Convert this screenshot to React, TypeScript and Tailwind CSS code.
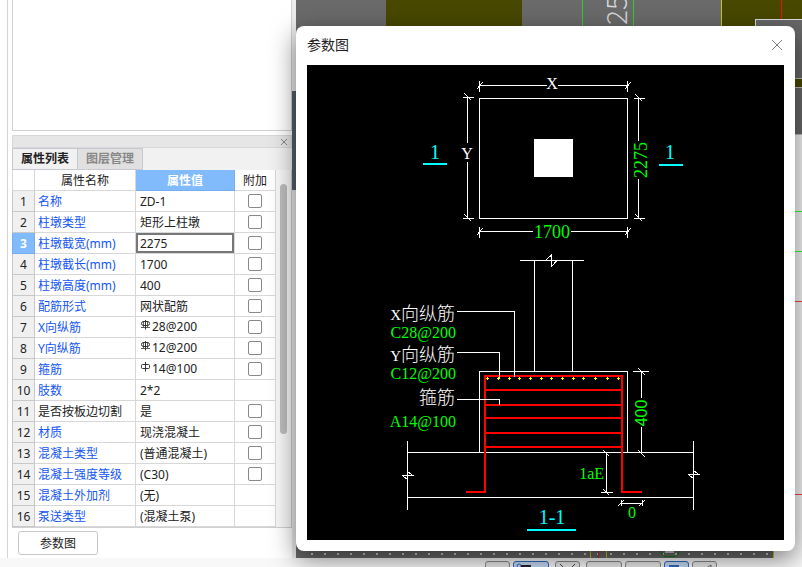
import React, { useState } from "react";
import clsx from "clsx";

type Row = {
  name: string;
  value: string;
  symbol?: "ribbed" | "plain";
  extra?: boolean;
  plainName?: boolean;
};

const rows: Row[] = [
  { name: "名称", value: "ZD-1", extra: true },
  { name: "柱墩类型", value: "矩形上柱墩", extra: true },
  { name: "柱墩截宽(mm)", value: "2275", extra: true },
  { name: "柱墩截长(mm)", value: "1700", extra: true },
  { name: "柱墩高度(mm)", value: "400", extra: true },
  { name: "配筋形式", value: "网状配筋", extra: true },
  { name: "X向纵筋", value: "28@200", symbol: "ribbed", extra: true },
  { name: "Y向纵筋", value: "12@200", symbol: "ribbed", extra: true },
  { name: "箍筋", value: "14@100", symbol: "plain", extra: true },
  { name: "肢数", value: "2*2" },
  { name: "是否按板边切割", value: "是", extra: true, plainName: true },
  { name: "材质", value: "现浇混凝土", extra: true },
  { name: "混凝土类型", value: "(普通混凝土)", extra: true },
  { name: "混凝土强度等级", value: "(C30)", extra: true },
  { name: "混凝土外加剂", value: "(无)" },
  { name: "泵送类型", value: "(混凝土泵)" },
];

// steel grade mark in front of a bar size
function BarSymbol({ kind }: { kind: "ribbed" | "plain" }) {
  return (
    <svg
      className="mr-px mb-1 inline-block"
      width="11"
      height="10"
      viewBox="0 0 11 10"
      fill="none"
      stroke="#333"
    >
      <path d="M5.5 0V9.500" />
      {kind === "plain" ? (
        <rect x="1.5" y="2.5" width="8" height="4" rx="1" />
      ) : (
        <>
          <rect x="1.5" y="1.5" width="8" height="4" rx="2" />
          <path d="M3.500 1V7M7.500 1V7M1 7.500H10" strokeWidth="0.8" />
        </>
      )}
    </svg>
  );
}

function PropertyTable() {
  const [size, setSize] = useState("2275");
  return (
    <table className="flex-1 table-fixed border-separate border-spacing-0 bg-white">
      <colgroup>
        <col className="w-[23px]" />
        <col className="w-[101px]" />
        <col className="w-[99px]" />
        <col className="w-[41px]" />
      </colgroup>
      <thead>
        <tr className="h-[21px]">
          <th className="border-x border-b border-[#d8d8d8] p-0"></th>
          <th className="border-r border-b border-[#d8d8d8] p-0 pt-[2px] font-normal">属性名称</th>
          <th className="border-r border-b border-[#74aef0] bg-[#82bbfb] p-0 pt-[2px] text-white">
            属性值
          </th>
          <th className="border-r border-b border-[#d8d8d8] p-0 pt-[2px] font-normal">附加</th>
        </tr>
      </thead>
      <tbody>
        {rows.map((row, i) => (
          <tr key={row.name} className="h-[21px]">
            <td
              className={clsx(
                "border-x border-b p-0 pt-[2px] text-center",
                i === 2
                  ? "border-[#74aef0] bg-[#82bbfb] font-bold text-white"
                  : "border-[#c8c8c8] bg-[#f0f0f0]"
              )}
            >
              {i + 1}
            </td>
            <td
              className={clsx(
                "border-r border-b border-[#d8d8d8] p-0 pt-[2px] pl-[3px] whitespace-nowrap",
                !row.plainName && "text-[#1456f5]"
              )}
            >
              {row.name}
            </td>
            <td className="border-r border-b border-[#d8d8d8] p-0 whitespace-nowrap">
              {i === 2 ? (
                <input
                  className="block h-5 w-full border-2 border-[#777] bg-white pt-px pl-[2px] outline-none"
                  aria-label={row.name}
                  value={size}
                  onChange={(e) => setSize(e.target.value)}
                />
              ) : (
                <div
                  className={clsx("flex h-5 items-center pl-1", !row.symbol && "pt-[2px]")}
                >
                  {row.symbol && <BarSymbol kind={row.symbol} />}
                  {row.value}
                </div>
              )}
            </td>
            <td className="border-r border-b border-[#d8d8d8] p-0">
              {row.extra && (
                <input
                  type="checkbox"
                  aria-label={row.name + " 附加"}
                  className="mx-auto block size-[14px] appearance-none rounded-[2px] border border-[#888] bg-white"
                />
              )}
            </td>
          </tr>
        ))}
      </tbody>
    </table>
  );
}

function Sidebar() {
  return (
    <aside className="flex w-[292px] shrink-0 bg-white">
      <div className="w-2 border-r border-[#d4d4d4]"></div>
      <div className="ml-1 flex flex-1 flex-col">
        <div className="flex-1 border-x border-b border-[#d0d0d0]"></div>
        <div className="mt-[4px] flex h-[13px] items-center justify-end border border-[#d8d8d8] bg-[#e6e6e6] pr-[3px]">
          <button aria-label="关闭">
            <svg className="block" width="8" height="8" viewBox="0 0 8 8" stroke="#888">
              <path d="M1 1L7 7M7 1L1 7" />
            </svg>
          </button>
        </div>
        <div className="flex h-[22px] bg-[#f1f1f1] font-bold">
          <button className="w-[66px] border border-[#c8c8d0] bg-[#f1f1f1]">属性列表</button>
          <button className="w-[65px] border border-l-0 border-[#c8c8d0] bg-[#e0e0e0] text-[#888]">
            图层管理
          </button>
        </div>
        <div className="flex border-r border-b border-[#d0d0d0] bg-[#f8f8f8]">
          <PropertyTable />
          <div className="w-[15px] px-1 pt-[14px]">
            <div className="h-[250px] rounded-full bg-[#bdbdbd]"></div>
          </div>
        </div>
        <button className="mt-[3px] mb-[3px] ml-[6px] h-6 w-20 rounded-[3px] border border-[#c8c8c8] bg-white pt-[2px]">
          参数图
        </button>
      </div>
    </aside>
  );
}

// dimension tick: a short bar across the line end plus the slash
function Tick({ x, y, vertical }: { x: number; y: number; vertical?: boolean }) {
  return vertical ? (
    <path d={`M${x} ${y - 5}v11M${x - 3} ${y + 4}l6 -7`} />
  ) : (
    <path d={`M${x - 5} ${y}h11M${x - 3} ${y - 4}l7 7`} />
  );
}

const dots = [487, 498, 509, 519, 530, 541, 551, 562, 573, 583, 595, 607, 618];
const hoops = [376, 390, 405, 418, 433, 447];

function SectionDrawing() {
  return (
    <svg
      className="block w-full bg-black"
      viewBox="307 65 477 475"
      fontFamily="'Liberation Serif', 'Noto Sans CJK SC', serif"
    >
      {/* plan */}
      <g fill="none" stroke="#fff" shapeRendering="crispEdges">
        <path d="M479.500 98.500H627.500V218.500H479.500Z" />
        <path d="M479.500 85.500H547M558 85.500H627.500" />
        <path d="M479.500 231.500H533M571 231.500H627.500" />
        <path d="M467.500 97.500V143M467.500 162V218.500" />
        <path d="M638.500 98.500V141M638.500 179V218.500" />
        <Tick x={479.5} y={85.5} vertical />
        <Tick x={627.5} y={85.5} vertical />
        <Tick x={479.5} y={231.5} vertical />
        <Tick x={627.5} y={231.5} vertical />
        <Tick x={467.5} y={97.5} />
        <Tick x={467.5} y={218.5} />
        <Tick x={638.5} y={98.5} />
        <Tick x={638.5} y={218.5} />
      </g>
      <path d="M534 139h39v38h-39z" fill="#fff" />
      <g fill="#fff" fontSize="16" textAnchor="middle">
        <text x="552" y="89">X</text>
        <text x="467" y="159">Y</text>
      </g>
      <g fill="#00ff00" fontSize="18" textAnchor="middle">
        <text x="552" y="238">1700</text>
        <text transform="translate(647 160) rotate(-90)">2275</text>
      </g>
      <g fill="#00ffff" fontSize="20" textAnchor="middle">
        <text x="435" y="159">1</text>
        <text x="670" y="159">1</text>
        <text x="552" y="524">1-1</text>
        <path d="M423 163h24v2h-24zM659 164h24v2h-24zM527 529h49v2h-49z" />
      </g>

      {/* section outline */}
      <g fill="none" stroke="#fff" shapeRendering="crispEdges">
        <path d="M520 260.500H584M545.500 260.500L551.500 255V266.500L557 260.500" />
        <path d="M534.500 260V371M572.500 260V371" />
        <path d="M479.500 452V371.500H627.500V452" />
        <path d="M407 452.500H693M407 497.500H693" />
        <path d="M407.500 441V510M693.500 441V510" />
        <path d="M402 475.500H413L408 472M402 475.500L407 479" />
        <path d="M688 474.500H699L694 471M688 474.500L693 478" />
        <path d="M641.500 371V398M641.500 427V453M633 371.500H649M638 368l7 7M638 450l7 7" />
        <path d="M606.500 453V492M601 492.500H613M603 450l6 6M603 489l6 6" />
        <path d="M621 503.500H642M621.500 500v6M642.500 500v6M618 506l6 -6M639 506l6 -6" />
      </g>

      {/* rebar */}
      <g fill="none" stroke="#ff0000" strokeWidth="2" shapeRendering="crispEdges">
        <path d="M466 492H485V376M642 492H622V376" />
        {hoops.map((y) => (
          <path key={y} d={`M484 ${y}H623`} />
        ))}
      </g>
      <g stroke="#ffff00" shapeRendering="crispEdges">
        {dots.map((x) => (
          <path key={x} d={`M${x - 1} 378.500h3M${x + 0.5} 377v3`} />
        ))}
      </g>
      <g fill="none" stroke="#fff" shapeRendering="crispEdges">
        <path d="M457 311.500H514.500V377M457 352.500H499.500V379M457 399.500H499.500V405" />
      </g>

      <g fill="#fff" fontSize="18" fontWeight="300" textAnchor="end">
        <text x="455" y="320">
          <tspan fontSize="15">X</tspan>向纵筋
        </text>
        <text x="455" y="361">
          <tspan fontSize="15">Y</tspan>向纵筋
        </text>
        <text x="455" y="404">箍筋</text>
      </g>
      <g fill="#00ff00" fontSize="16" textAnchor="end">
        <text x="456" y="338">C28@200</text>
        <text x="456" y="379">C12@200</text>
        <text x="456" y="427">A14@100</text>
        <text x="604" y="479">1aE</text>
        <text x="636" y="518">0</text>
      </g>
      <text
        transform="translate(647 413) rotate(-90)"
        fill="#00ff00"
        fontSize="16"
        textAnchor="middle"
        fontFamily="'Liberation Sans', sans-serif"
      >
        400
      </text>
    </svg>
  );
}

// model view behind the dialog
function ModelView() {
  return (
    <svg
      className="absolute inset-0 size-full"
      viewBox="296 0 506 558"
      preserveAspectRatio="xMinYMin slice"
      shapeRendering="crispEdges"
      aria-hidden="true"
    >
      <path d="M296 0H802V134H296z" fill="#6a6a6a" />
      <path d="M296 134H802V558H296z" fill="#f6f6f6" />
      <path d="M386 0H522V100H386zM722 0H802V100H722z" fill="#484800" />
      <path d="M582.500 0V100M633.500 0V100" stroke="#2fcf2f" />
      <path d="M721.500 0V100" stroke="#c8c820" />
      <path d="M781.500 0V20" stroke="#f01010" />
      <path d="M755 19H802V134H755z" fill="#686868" />
      <path d="M755.500 60V19.500H802" fill="none" stroke="#ddd" />
      <path d="M790 79H802V87H790z" fill="#484800" />
      <path d="M790 78.500H802M790 87.500H802M790 134.500H802" stroke="#bbb" />
      <path d="M790 211.500H802M790 251.500H802" stroke="#30ff30" />
      <path d="M790 301.500H802M790 494.500H802" stroke="#ff4040" />
      <text
        transform="translate(627 25) rotate(-90)"
        fill="#d8d8d8"
        fontSize="28"
        fontWeight="300"
        fontFamily="'Noto Sans CJK SC', sans-serif"
      >
        25
      </text>
      <path d="M296 540H773V558H296z" fill="#6a6a6a" />
      <path d="M311 554H773" stroke="#ccc" strokeWidth="2" strokeDasharray="2 11" />
      <path d="M590.500 550V558M606.500 550V558M773.500 550V558" stroke="#c8c820" />
      <path d="M598.500 550V558" stroke="#d02020" />
      <path d="M660 551L664 556H676L680 551" fill="none" stroke="#108010" />
      <path d="M665 552H674" stroke="#ccc" strokeWidth="2" />
    </svg>
  );
}

function ParamDialog() {
  return (
    <div
      role="dialog"
      aria-label="参数图"
      className="absolute top-[26px] right-[7px] left-0 z-10 rounded-lg bg-white px-[11px] pb-[11px] shadow-[0_8px_26px_rgba(0,0,0,0.5)]"
    >
      <div className="flex h-[39px] items-center justify-between pb-[2px] text-sm">
        <h2>参数图</h2>
        <button aria-label="关闭">
          <svg width="14" height="12" viewBox="0 0 14 12" stroke="#808080">
            <path d="M2 1L12 11M12 1L2 11" />
          </svg>
        </button>
      </div>
      <SectionDrawing />
    </div>
  );
}

function BottomBar() {
  const tool = "h-5 shrink-0 rounded-[3px] border border-[#888] bg-[#e8e8e8]";
  const active = "h-5 shrink-0 rounded-[3px] border border-[#2a6cc0] bg-[#c4d8f2]";
  return (
    <footer className="flex h-[9px] items-start justify-end gap-[3px] overflow-hidden bg-[#f8f8f8] pt-[3px] pr-[85px]">
      <button className={clsx(tool, "w-[25px]")} aria-label="选择"></button>
      <button className={clsx(active, "w-9")} aria-label="正交">
        <svg width="34" height="18" viewBox="0 0 34 18" fill="none" stroke="#222">
          <circle cx="5" cy="4" r="2" stroke="#2a6cc0" />
          <path d="M7 4H17" strokeWidth="2" />
        </svg>
      </button>
      <button className={clsx(tool, "mx-[3px] w-[25px]")} aria-label="交点">
        <svg width="23" height="18" viewBox="0 0 23 18" fill="none" stroke="#444">
          <path d="M4 2L9 7M19 2L14 7" />
        </svg>
      </button>
      <button className={clsx(tool, "w-9")} aria-label="垂点"></button>
      <button className={clsx(tool, "w-9")} aria-label="中点"></button>
      <button className={clsx(active, "w-[25px]")} aria-label="顶点">
        <svg width="23" height="18" viewBox="0 0 23 18" fill="none" stroke="#2a6cc0">
          <path d="M4 4H14" strokeWidth="2" />
        </svg>
      </button>
      <button className={clsx(tool, "w-[25px]")} aria-label="坐标">
        <svg width="23" height="18" viewBox="0 0 23 18" fill="none" stroke="#666">
          <path d="M12 7L18 3V7" />
        </svg>
      </button>
    </footer>
  );
}

function App() {
  return (
    <div className="flex h-screen flex-col overflow-hidden bg-white font-['Noto_Sans','Noto_Sans_CJK_SC',sans-serif] text-xs text-[#222]">
      <div className="flex min-h-0 flex-1">
        <Sidebar />
        <div className="w-1 shrink-0 bg-[#ececec] pt-[91px]">
          <div className="h-[99px] bg-[#55606c]"></div>
        </div>
        <main className="relative flex-1">
          <ModelView />
          <ParamDialog />
        </main>
      </div>
      <BottomBar />
    </div>
  );
}

export default App;
